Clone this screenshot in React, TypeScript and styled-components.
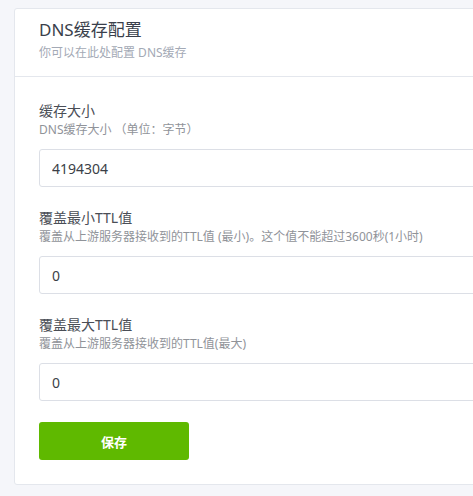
import React from "react";
import styled, { createGlobalStyle } from "styled-components";

const Global = createGlobalStyle`
  html, body { margin: 0; padding: 0; background: #f5f6fa; }
  body { font-family: "Noto Sans", "Noto Sans CJK SC", sans-serif; overflow: hidden; }
  * { box-sizing: border-box; }
`;

const Page = styled.div`
  width: 473px;
  height: 496px;
  overflow: hidden;
  padding: 8px 0 0 14px;
`;

const Card = styled.div`
  width: 720px;
  background: #fff;
  border: 1px solid #e4e7ed;
  border-radius: 3px;
`;

const Header = styled.div`
  padding: 8px 24px 14px;
  border-bottom: 1px solid #e4e7ed;
`;

const Title = styled.div`
  font-size: 17px;
  line-height: 26px;
  color: #3a3f4b;
`;

const Subtitle = styled.div`
  font-size: 12px;
  line-height: 18px;
  margin-top: 1px;
  color: #a3a9b5;
`;

const Body = styled.div`
  padding: 24px 24px 24px;
`;

const Group = styled.div`
  margin-bottom: 21px;
`;

const Label = styled.div`
  font-size: 14px;
  line-height: 20px;
  color: #4a4e56;
`;

const Desc = styled.div`
  font-size: 12px;
  line-height: 18px;
  color: #909399;
`;

const Input = styled.input`
  display: block;
  margin-top: 10px;
  width: 100%;
  height: 38px;
  padding: 0 12px;
  border: 1px solid #dcdfe6;
  border-radius: 3px;
  font-family: inherit;
  font-size: 14px;
  color: #3b3f47;
  background: #fff;
  outline: none;
`;

const SaveButton = styled.button`
  width: 150px;
  height: 38px;
  background: #5fb900;
  border: none;
  border-radius: 3px;
  color: #fff;
  font-family: inherit;
  font-size: 13px;
  font-weight: bold;
  cursor: pointer;
`;

const fields = [
  { label: "缓存大小", desc: "DNS缓存大小 （单位：字节）", value: "4194304" },
  {
    label: "覆盖最小TTL值",
    desc: "覆盖从上游服务器接收到的TTL值 (最小)。这个值不能超过3600秒(1小时)",
    value: "0",
  },
  { label: "覆盖最大TTL值", desc: "覆盖从上游服务器接收到的TTL值(最大)", value: "0" },
];

export default function App() {
  return (
    <>
      <Global />
      <Page>
        <Card>
          <Header>
            <Title>DNS缓存配置</Title>
            <Subtitle>你可以在此处配置 DNS缓存</Subtitle>
          </Header>
          <Body>
            {fields.map((f) => (
              <Group key={f.label}>
                <Label>{f.label}</Label>
                <Desc>{f.desc}</Desc>
                <Input defaultValue={f.value} />
              </Group>
            ))}
            <SaveButton>保存</SaveButton>
          </Body>
        </Card>
      </Page>
    </>
  );
}
